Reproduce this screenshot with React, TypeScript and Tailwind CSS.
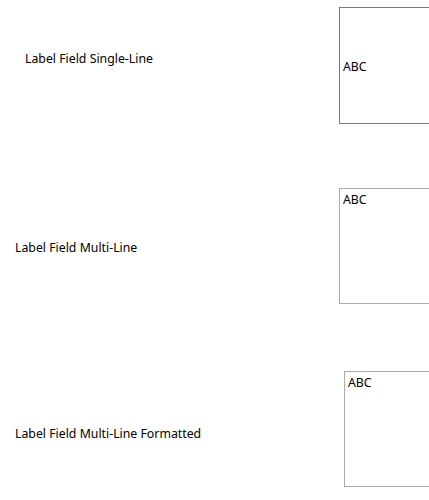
import React from "react";

export default function App() {
  return (
    <div
      className="w-[429px] h-[500px] overflow-hidden bg-white text-black text-[12.3px] leading-[16px]"
      style={{ fontFamily: '"Noto Sans", "Open Sans", sans-serif' }}
    >
      <div className="flex mt-[7px] h-[117px]">
        <div className="w-[339px] shrink-0 pl-[25px] pt-[44px]">Label Field Single-Line</div>
        <div className="w-[120px] shrink-0 border border-[#7a7a7a] flex items-center pl-[3px] pt-[2px]">ABC</div>
      </div>
      <div className="flex mt-[64px] h-[116px]">
        <div className="w-[339px] shrink-0 pl-[15px] pt-[52px]">Label Field Multi-Line</div>
        <div className="w-[120px] shrink-0 border border-[#ababab] pl-[3px] pt-[3px]">ABC</div>
      </div>
      <div className="flex mt-[67px] h-[116px]">
        <div className="w-[344px] shrink-0 pl-[15px] pt-[55px]">Label Field Multi-Line Formatted</div>
        <div className="w-[120px] shrink-0 border border-[#ababab] pl-[3px] pt-[3px]">ABC</div>
      </div>
    </div>
  );
}
